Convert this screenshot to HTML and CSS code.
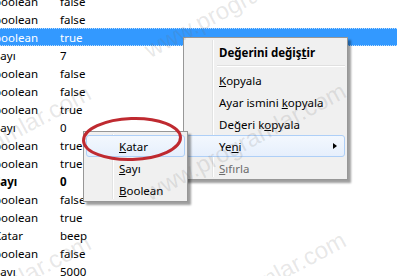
FILE: index.html
```html
<!DOCTYPE html>
<html lang="tr">
<head>
<meta charset="utf-8">
<link rel="stylesheet" href="styles.css">
</head>
<body>
<div class="list">
  <div class="row"><span class="type">boolean</span><span class="val">false</span></div>
  <div class="row"><span class="type">boolean</span><span class="val">false</span></div>
  <div class="row sel"><span class="type">boolean</span><span class="val">true</span></div>
  <div class="row"><span class="type">Sayı</span><span class="val">7</span></div>
  <div class="row"><span class="type">boolean</span><span class="val">false</span></div>
  <div class="row"><span class="type">boolean</span><span class="val">false</span></div>
  <div class="row"><span class="type">boolean</span><span class="val">true</span></div>
  <div class="row"><span class="type">Sayı</span><span class="val">0</span></div>
  <div class="row"><span class="type">boolean</span><span class="val">true</span></div>
  <div class="row"><span class="type">boolean</span><span class="val">true</span></div>
  <div class="row bold"><span class="type">Sayı</span><span class="val">0</span></div>
  <div class="row"><span class="type">boolean</span><span class="val">false</span></div>
  <div class="row"><span class="type">boolean</span><span class="val">true</span></div>
  <div class="row"><span class="type">Katar</span><span class="val">beep</span></div>
  <div class="row"><span class="type">boolean</span><span class="val">false</span></div>
  <div class="row"><span class="type">Sayı</span><span class="val">5000</span></div>
</div>

<div class="menu main-menu">
  <div class="item strong"><span class="label">Değerini değiş<u>t</u>ir</span></div>
  <div class="sep"></div>
  <div class="item"><span class="label"><u>K</u>opyala</span></div>
  <div class="item"><span class="label">Ayar ismini <u>k</u>opyala</span></div>
  <div class="item"><span class="label">Değeri k<u>o</u>pyala</span></div>
  <div class="item hot"><span class="label">Ye<u>n</u>i</span><span class="arrow"></span></div>
  <div class="item disabled"><span class="label"><u>S</u>ıfırla</span></div>
</div>

<div class="menu sub-menu">
  <div class="item hot"><span class="label"><u>K</u>atar</span></div>
  <div class="item"><span class="label"><u>S</u>ayı</span></div>
  <div class="item"><span class="label"><u>B</u>oolean</span></div>
</div>

<svg class="ring" width="110" height="54" viewBox="0 0 110 54">
  <ellipse cx="53" cy="25" rx="48.5" ry="20.5" transform="rotate(-2 53 25)" fill="none" stroke="#bf2a30" stroke-width="3"/>
</svg>

<div class="marks">
  <span class="mark m1">www.programlar.com</span>
  <span class="mark m2">www.programlar.com</span>
  <span class="mark m3">www.programlar.com</span>
  <span class="mark m4">www.programlar.com</span>
  <span class="mark m5">www.programlar.com</span>
</div>
</body>
</html>
```
FILE: styles.css
```css
html, body {
  margin: 0;
  padding: 0;
  overflow: hidden;
}
body {
  width: 397px;
  height: 276px;
  position: relative;
  background: #fff;
  font-family: "Noto Sans", "Liberation Sans", sans-serif;
  font-size: 11.5px;
  color: #000;
}

.list {
  margin-top: -8px;
  height: 284px;
  overflow: hidden;
  display: flex;
  flex-direction: column;
}
.row {
  flex: none;
  height: 18px;
  display: flex;
  align-items: center;
  box-sizing: border-box;
}
.type {
  width: 66px;
  margin-left: -6px;
}
.val {
  flex: 1;
}
.row.sel {
  background: #3399ff;
  color: #fff;
  border-top: 1px dotted #b9dcff;
  border-bottom: 1px dotted #b9dcff;
}
.row.bold {
  font-weight: bold;
}

.menu {
  position: absolute;
  box-sizing: border-box;
  background: #f0f0f0;
  border: 1px solid #979797;
  box-shadow: 3px 3px 2px rgba(0, 0, 0, 0.38);
  padding: 3px 2px 0 2px;
  display: flex;
  flex-direction: column;
}
.menu::before {
  content: "";
  position: absolute;
  top: 2px;
  bottom: 2px;
  left: 28px;
  width: 1px;
  background: #e2e3e3;
  border-right: 1px solid #fff;
}
.main-menu {
  left: 183px;
  top: 37px;
  width: 165px;
  height: 143px;
}
.sub-menu {
  left: 83px;
  top: 131px;
  width: 105px;
  height: 71px;
  z-index: 2;
}
.item {
  position: relative;
  z-index: 1;
  height: 22px;
  box-sizing: border-box;
  display: flex;
  align-items: center;
  padding-left: 32px;
  border: 1px solid transparent;
  border-radius: 3px;
  white-space: nowrap;
}
.label {
  white-space: pre;
}
.item.strong {
  font-weight: bold;
}
.item.disabled {
  color: #6d6d6d;
}
.item.hot {
  border-color: #aecff7;
  background: linear-gradient(#f3f8fe, #e6effc);
}
.sep {
  height: 6px;
  margin-left: 31px;
  position: relative;
  z-index: 1;
  display: flex;
  align-items: center;
}
.sep::after {
  content: "";
  flex: 1;
  height: 1px;
  background: #e0e0e0;
  border-bottom: 1px solid #fff;
}
.arrow {
  position: absolute;
  right: 7px;
  top: 7px;
  width: 0;
  height: 0;
  border-top: 3.5px solid transparent;
  border-bottom: 3.5px solid transparent;
  border-left: 4px solid #000;
}

.ring {
  position: absolute;
  left: 79px;
  top: 114px;
  z-index: 3;
}

.marks {
  position: absolute;
  inset: 0;
  z-index: 4;
  pointer-events: none;
}
.mark {
  position: absolute;
  font-family: "Liberation Sans", Arial, sans-serif;
  font-size: 24px;
  line-height: 24px;
  color: rgba(110, 110, 110, 0.16);
  white-space: nowrap;
  transform-origin: 0 100%;
  transform: rotate(-28deg);
}
.m1 { left: 152px; top: 38px; }
.m2 { left: 152px; top: 181px; }
.m3 { left: 152px; top: 330px; }
.m4 { left: -103px; top: 183px; }
.m5 { left: -103px; top: 333px; }
```
